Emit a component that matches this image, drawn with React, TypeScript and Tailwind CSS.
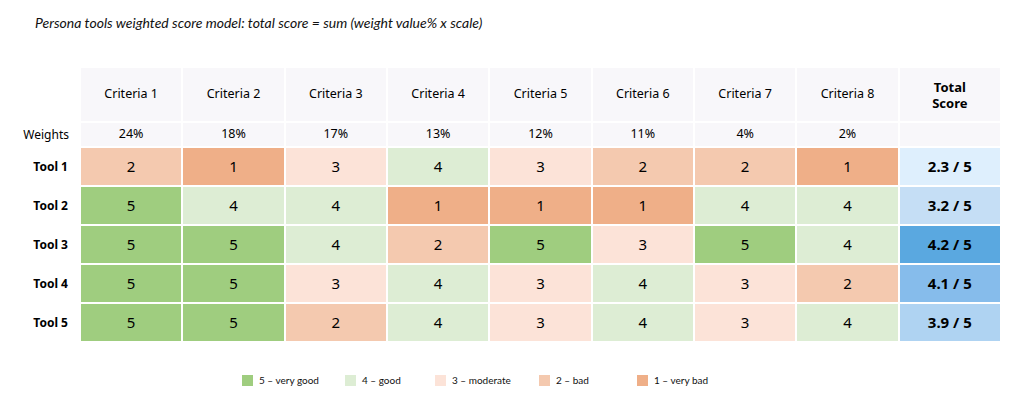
const CRITERIA = ['Criteria 1', 'Criteria 2', 'Criteria 3', 'Criteria 4', 'Criteria 5', 'Criteria 6', 'Criteria 7', 'Criteria 8'];
const WEIGHTS = ['24%', '18%', '17%', '13%', '12%', '11%', '4%', '2%'];

const SCORE_BG: Record<number, string> = {
  5: 'bg-[#9fcd7f]',
  4: 'bg-[#ddedd4]',
  3: 'bg-[#fce3d8]',
  2: 'bg-[#f4c9af]',
  1: 'bg-[#efaf88]',
};

const TOOLS = [
  { name: 'Tool 1', scores: [2, 1, 3, 4, 3, 2, 2, 1], total: '2.3 / 5', bg: 'bg-[#deeffd]' },
  { name: 'Tool 2', scores: [5, 4, 4, 1, 1, 1, 4, 4], total: '3.2 / 5', bg: 'bg-[#c5def5]' },
  { name: 'Tool 3', scores: [5, 5, 4, 2, 5, 3, 5, 4], total: '4.2 / 5', bg: 'bg-[#5aa8e0]' },
  { name: 'Tool 4', scores: [5, 5, 3, 4, 3, 4, 3, 2], total: '4.1 / 5', bg: 'bg-[#86bceb]' },
  { name: 'Tool 5', scores: [5, 5, 2, 4, 3, 4, 3, 4], total: '3.9 / 5', bg: 'bg-[#afd3f2]' },
];

const LEGEND = [
  { label: '5 – very good', bg: 'bg-[#9fcd7f]', w: 'w-[103px]' },
  { label: '4 – good', bg: 'bg-[#ddedd4]', w: 'w-[90px]' },
  { label: '3 – moderate', bg: 'bg-[#fce3d8]', w: 'w-[104px]' },
  { label: '2 – bad', bg: 'bg-[#f4c9af]', w: 'w-[98px]' },
  { label: '1 – very bad', bg: 'bg-[#efaf88]', w: 'w-[80px]' },
];

const App: React.FC = () => {
  return (
    <div className="w-[1024px] h-[409px] bg-white text-[#111] overflow-hidden">
      <p className="pl-[35px] pt-[14px] text-[14px] leading-[18px] italic font-['Lato',sans-serif]">
        Persona tools weighted score model: total score = sum (weight value% x scale)
      </p>

      <div className="mt-[36px] w-[1000px] grid grid-cols-[79px_repeat(9,minmax(0,1fr))] gap-x-[2px] gap-y-[2px] font-['Noto_Sans',sans-serif] text-[12px] text-black">
        {/* header */}
        <div />
        {CRITERIA.map((c) => (
          <div key={c} className="h-[53px] bg-[#f8f7fa] flex items-center justify-center text-[12.5px]">
            {c}
          </div>
        ))}
        <div className="h-[53px] bg-[#f8f7fa] flex items-center justify-center text-center font-bold text-[13px] leading-[16px]">
          Total<br />Score
        </div>

        {/* weights */}
        <div className="h-[23px] flex items-center justify-end pr-[10px]">Weights</div>
        {WEIGHTS.map((w, i) => (
          <div key={i} className="h-[23px] bg-[#f8f7fa] flex items-center justify-center text-[12.5px]">
            {w}
          </div>
        ))}
        <div className="h-[23px] bg-[#f8f7fa]" />

        {/* tools */}
        {TOOLS.map((t) => (
          <>
            <div key={t.name} className="h-[37px] flex items-center justify-end pr-[11px] font-bold">
              {t.name}
            </div>
            {t.scores.map((s, i) => (
              <div key={t.name + i} className={`h-[37px] flex items-center justify-center text-[15px] ${SCORE_BG[s]}`}>
                {s}
              </div>
            ))}
            <div className={`h-[37px] flex items-center justify-center font-bold text-[15px] ${t.bg}`}>
              {t.total}
            </div>
          </>
        ))}
      </div>

      <div className="mt-[32px] pl-[242px] flex items-center text-[10px] font-['Lato',sans-serif]">
        {LEGEND.map((l) => (
          <div key={l.label} className={`flex items-center gap-[6px] ${l.w}`}>
            <span className={`w-[11px] h-[11px] ${l.bg}`} />
            <span>{l.label}</span>
          </div>
        ))}
      </div>
    </div>
  );
};

export default App;
